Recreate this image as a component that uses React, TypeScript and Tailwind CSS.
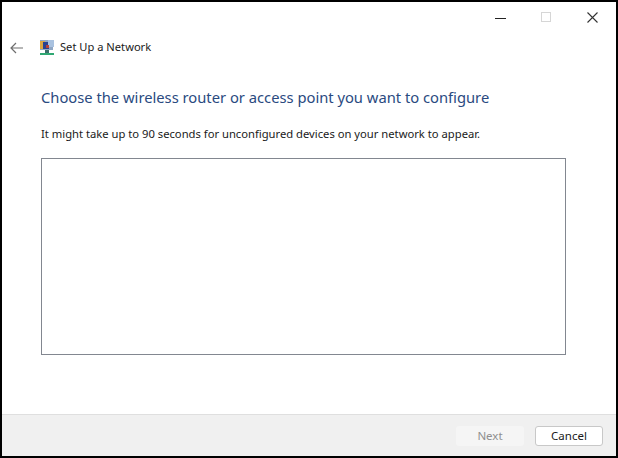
const font = { fontFamily: '"Noto Sans", "Open Sans", sans-serif' }

function NetworkIcon() {
  return (
    <svg width="16" height="17" viewBox="0 0 16 17" className="shrink-0">
      <rect x="1" y="1" width="13" height="10" fill="#8fa6c4" />
      <rect x="1" y="2" width="5" height="8" fill="#d9a441" />
      <rect x="4" y="3" width="6" height="7" fill="#27408f" />
      <rect x="9" y="1" width="6" height="7" fill="#a9c2e0" />
      <rect x="7" y="6" width="3" height="3" fill="#b5403a" />
      <rect x="6" y="11" width="4" height="3" fill="#3c6f6a" />
      <rect x="1" y="14" width="14" height="2" fill="#2fa873" />
    </svg>
  )
}

function WindowControls() {
  return (
    <div className="flex h-[30px] justify-end pr-[1px]">
      <div className="flex w-[46px] items-center justify-center pt-[3px]">
        <div className="h-[1px] w-[11px] bg-[#222222]" />
      </div>
      <div className="flex w-[46px] items-center justify-center">
        <div className="h-[10px] w-[10px] border border-[#d6d6d6]" />
      </div>
      <div className="flex w-[46px] items-center justify-center">
        <svg width="11" height="11" viewBox="0 0 11 11" stroke="#333333" strokeWidth="1.1">
          <path d="M0.5 0.5 L10.5 10.5 M10.5 0.5 L0.5 10.5" />
        </svg>
      </div>
    </div>
  )
}

export default function App() {
  return (
    <div style={font} className="flex h-[458px] w-[618px] flex-col border-2 border-black bg-white">
      <WindowControls />

      <div className="flex h-[30px] items-center pl-[7px] pt-[1px]">
        <svg width="16" height="14" viewBox="0 0 16 14" fill="none" stroke="#6e6e6e" strokeWidth="1.2">
          <path d="M14 7 H2 M7 2 L2 7 L7 12" />
        </svg>
        <div className="ml-[14px] flex items-center gap-[5px]">
          <NetworkIcon />
          <span className="text-[11.15px] text-[#1a1a1a]">Set Up a Network</span>
        </div>
      </div>

      <div className="flex-1 pl-[39px] pr-[50px] pt-[19px]">
        <h1 className="text-[14.74px] leading-[32px] font-normal text-[#2a4a7f]">
          Choose the wireless router or access point you want to configure
        </h1>
        <p className="mt-[12px] text-[11.23px] leading-[18px] text-[#1a1a1a]">
          It might take up to 90 seconds for unconfigured devices on your network to appear.
        </p>
        <div className="mt-[15px] h-[197px] border border-[#828790] bg-white" />
      </div>

      <div className="flex h-[42px] items-center justify-end gap-[11px] border-t border-[#dfdfdf] bg-[#f0f0f0] pr-[13px]">
        <button className="h-[20px] w-[68px] rounded-[3px] bg-[#f5f5f5] text-[11.5px] text-[#8f8f8f]">Next</button>
        <button className="h-[20px] w-[68px] rounded-[3px] border border-[#c8c8c8] bg-white text-[11.5px] text-[#1a1a1a]">Cancel</button>
      </div>
    </div>
  )
}
